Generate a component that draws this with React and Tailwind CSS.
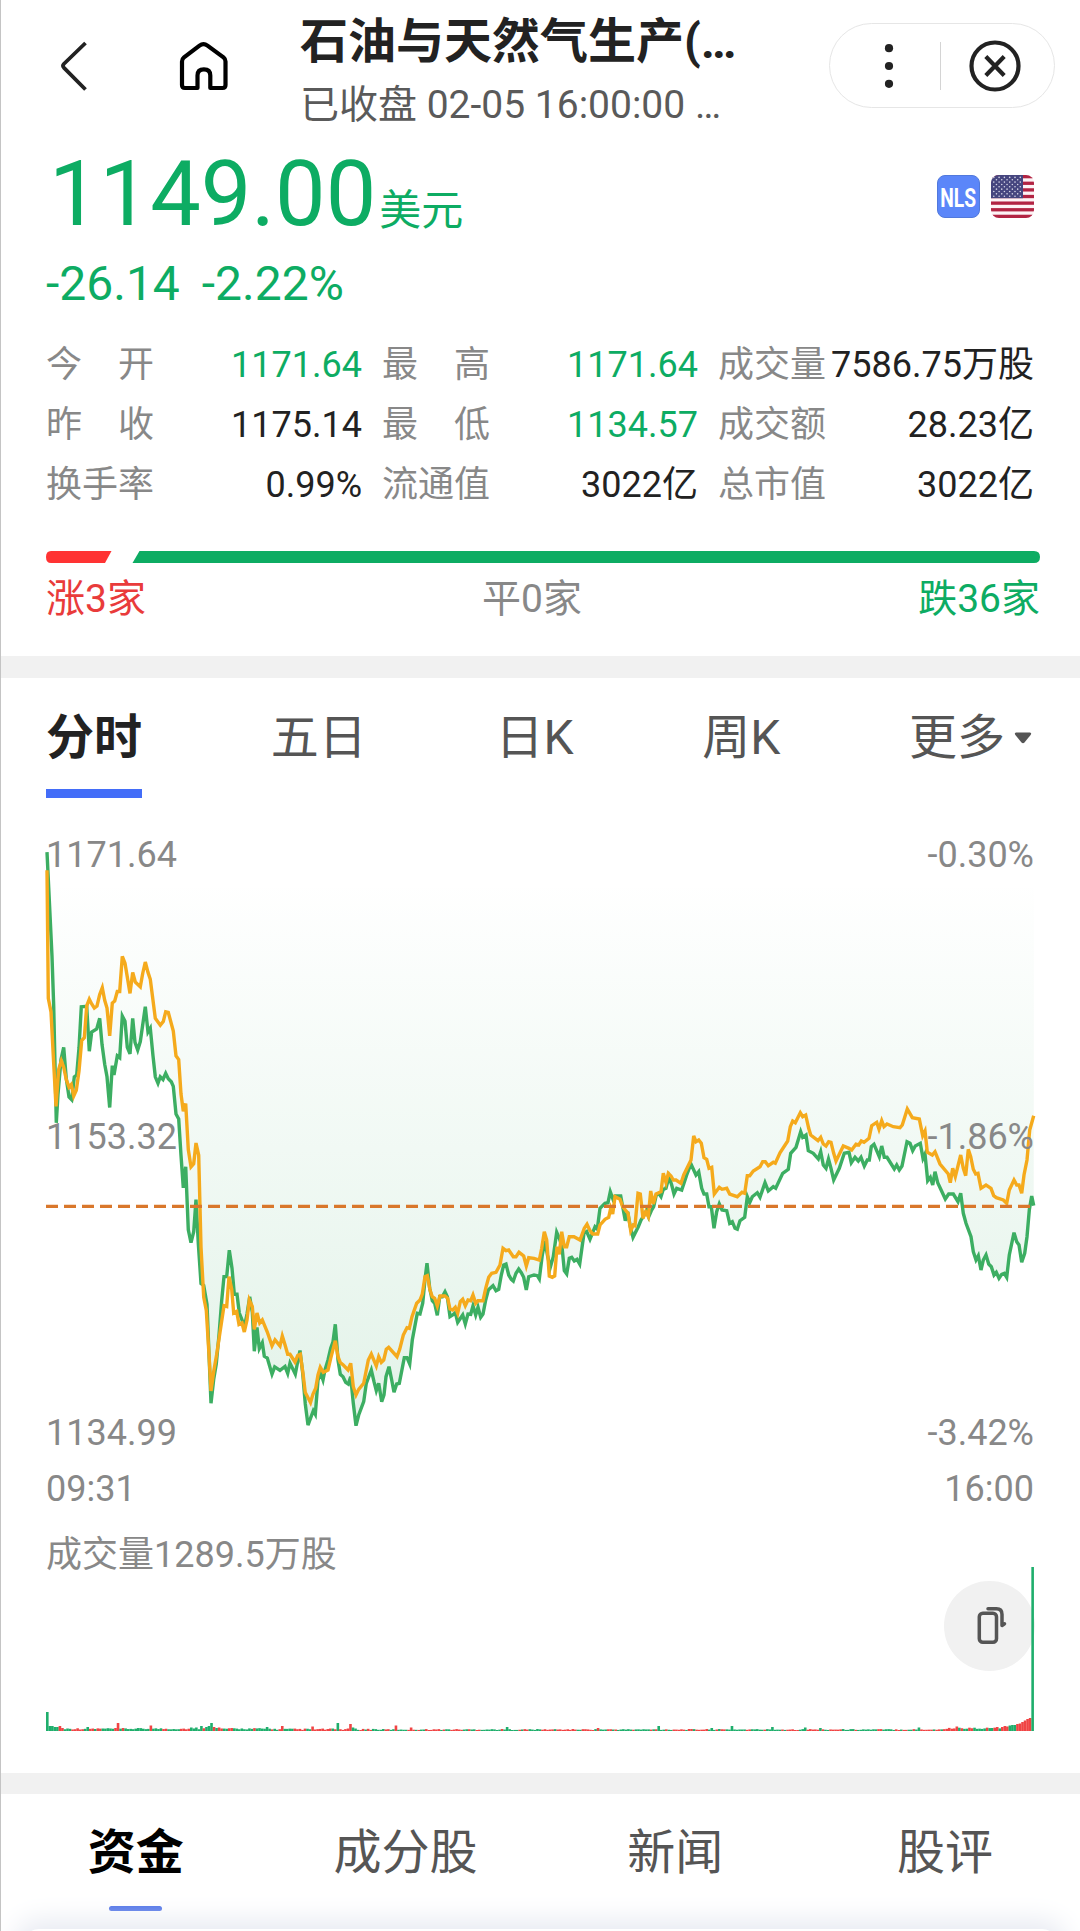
import React, { useState } from 'react';

const stats = [
  { label: '今开', value: '1171.64', down: true },
  { label: '最高', value: '1171.64', down: true },
  { label: '成交量', value: '7586.75万股' },
  { label: '昨收', value: '1175.14' },
  { label: '最低', value: '1134.57', down: true },
  { label: '成交额', value: '28.23亿' },
  { label: '换手率', value: '0.99%' },
  { label: '流通值', value: '3022亿' },
  { label: '总市值', value: '3022亿' },
];

const periods = ['分时', '五日', '日K', '周K', '更多'];
const sections = ['资金', '成分股', '新闻', '股评'];

const priceLine = `47,852.2 52,956.3 53.7,1006 56.3,1122.8 58,1094 61,1059.6 63.7,1047.4 66.3,1078.8 69,1097 71.7,1099.8
74.3,1076.8 76.7,1075 79,1048 81.3,1006.8 86.7,1006.4 89.3,1051.2 91.7,1032 96.7,1029 99.7,1018.3 102,1044.3
104.7,1064.2 107,1076.8 109.7,1107.5 112.3,1065.7 114,1075 117.3,1055.8 119.7,1057.7 122.3,1016 125,1021.3 127.3,1047.4
130,1053.9 132.7,1018.3 135,1042.4 137.7,1050 140.3,1041.6 145.3,1006.8 148,1032 150.3,1028.2 153,1055.8 155.3,1076.8
158,1083.3 160.3,1076.8 163,1079.5 165.7,1073.4 168.3,1078.8 171.3,1081.8 173.3,1086.4 176,1114 178.7,1119 181,1155.3
183.3,1187.8 185.7,1166.8 188.3,1229.9 191,1242.6 193.7,1231.8 196,1199.7 198.3,1243.3 201,1283.5 203.7,1285.4 207,1304.5
211,1403.3 213.7,1379.2 216.3,1363.9 219,1335.2 221.7,1300.7 224,1276.6 226.7,1276.6 229.3,1250.2 232,1268.2 234.3,1294.2
237,1294.2 239.3,1313 242,1319.9 244.3,1327.5 247,1314 249.7,1296.9 252.3,1312.2 254.3,1351.2 257,1327.5 259.3,1348.6
262.3,1342.8 264.3,1356.2 267.3,1358.1 272,1374.2 274.7,1366.9 280,1370.4 285,1366.5 287.7,1373.4 290,1363.1 295.3,1374.2
298,1360 300,1350.5 302.7,1373.4 305.3,1404 308,1425.1 313.3,1410.7 315.3,1414.3 318,1380 320.7,1373.3 323,1380
325,1370 328,1360 330.7,1348.3 333,1341.7 335.3,1324.3 338,1360 340.3,1374.3 343,1376.7 345.7,1382.3 348.3,1384
350.7,1376.7 353.3,1403.3 356,1425.7 358.7,1415 363.7,1401.7 366.3,1383.3 371.3,1370 374,1381.7 376.3,1390.7 378.7,1383.3
381.7,1401.7 384,1395 386,1376.7 389,1366.7 391.7,1380 394,1392.3 396.7,1384 399.3,1383.3 404.3,1357.7 407,1357.7
409.7,1364 412.3,1340 417.3,1313.3 420,1314 422.7,1303.3 425.3,1276.7 427,1263.3 429.7,1288.3 432.3,1300.7 434.7,1303.3
437.3,1315.3 439.7,1296.7 442.3,1296.7 445,1291.7 447.3,1296.7 450,1316.7 452.7,1315 455.3,1312.7 457.7,1322.3 462.7,1315
465.3,1324 468,1314 470.7,1314.3 473,1306 475.7,1315 478,1307.3 480.7,1317.3 483,1314 485.7,1300 488.3,1290
493,1285.7 496,1290.7 498.7,1289.3 501.3,1275 503.7,1265 506,1264 508.7,1275 511.3,1279.3 513.3,1281 516,1273.3
518.7,1269 521.3,1272.7 523.7,1277.3 526.3,1290 528.7,1276.7 534,1275 537.3,1275.7 539.3,1279 542.3,1255 545,1240.7
547.7,1256.7 550.3,1267.3 553.3,1256.7 556.7,1232.3 559.3,1238.3 562,1246.7 564.3,1270.7 566.7,1274 569.3,1258.3 571.7,1257.3
574.3,1261 577,1259.3 579.7,1264 584,1233.3 586.7,1231.5 590,1239.3 595,1226.7 597.3,1229 600,1208.3 605,1203.3
608,1202.7 610.3,1191.7 613,1199.3 615.3,1196 620.7,1196 623.3,1210 625.3,1220.7 627.7,1211.7 630.3,1226.7 633,1237.3
638.3,1226.7 641,1220 643.3,1216.7 646.7,1210 648.7,1216.7 651.3,1210.7 653.7,1206.7 656.3,1195 658.7,1193.3 661,1196.7
663.3,1189.3 666,1188.3 669,1176.7 671.7,1185 674,1194 676.7,1188.3 681.7,1190 686.7,1175 691,1164 696,1175
698.7,1171.7 701.7,1188.3 704,1194 706.7,1194 709,1206.7 711.3,1206.7 714,1228.3 716.7,1211.7 719.3,1204 722,1210
726.7,1210.7 729.7,1223.3 732.3,1221.7 735,1228.3 737.3,1229.3 740,1220.7 744.7,1217.3 747.3,1196.7 749.7,1202.7 752.3,1196.7
757.3,1192.7 760,1197.3 765,1182.7 768.3,1191 773.3,1186.7 775.7,1188.3 782.7,1173.3 788.3,1169.3 790.7,1153.3 796,1147.3
800.7,1131.7 802.7,1137.3 806,1135 808.3,1150.7 813.3,1153.3 818.3,1159 820.7,1151.7 823.3,1165 826,1168.3 828.5,1159
831,1168.3 833.7,1180 839.3,1168.3 844.3,1153.3 849,1152.3 851.3,1162.7 855,1157.3 858.3,1161 861,1157.3 864.3,1166
867.3,1160 869.3,1160 871.3,1146.7 874,1144.3 879.3,1156.7 881.7,1146 884.3,1157.3 887,1157.3 894.3,1169 896.7,1165
899.3,1170 902,1166 907,1141.7 910,1143.3 912.7,1150.7 915.3,1146 920.3,1143.3 923,1158.3 925,1154 927.7,1180.7
930.3,1177.3 932.7,1185 935,1171.7 937.7,1182.7 940.3,1188.3 945.3,1199 948.7,1194 953.3,1194 958,1201.7 960.7,1193.3
963.3,1213.3 966,1223.3 971,1236.7 973.3,1251.7 976,1260 978.3,1255.7 981,1270 983.3,1260 986,1255 988.7,1264
991.3,1266.7 994,1275 996.3,1272.3 999,1278.3 1001.7,1274.3 1004.3,1273.3 1006.7,1277.3 1009.3,1255 1014,1232.7 1016.7,1241.7
1019,1245 1021.7,1262.3 1024.7,1253.3 1027,1236.7 1029.3,1210 1031.7,1196 1033.7,1205.7`;

const averageLine = `47,870.2 48.3,998.4 51,1011.8 53.3,1055.8 56,1106.3 58.7,1069.2 61.3,1060.8 63.7,1067.3 66.3,1079.5 69,1087.2
71.3,1084.5 73.7,1096 76.3,1090.2 79,1071 81.7,1040.5 84.3,1037.8 86.7,1006 89.3,999.2 91.7,1004 94.3,1008
97,1006 99.7,994.6 102.3,987.7 104.7,1000.3 107,1008 109.7,1035.9 112.3,1003 114.7,1001 117.3,991.5 119.7,991.5
122.3,956.3 125,963.2 130,993.4 132.7,972.4 135.3,982 140.3,986.9 142.7,973.5 145.3,962 148,972.4 150.3,979.3
155.3,1018.3 160.3,1025.2 163.3,1021.4 165.7,1011.8 168.3,1012.5 173.3,1031 176,1055.8 178.7,1059.6 181,1094 183.3,1111.3
185.7,1103.6 188.3,1149.5 191,1166.8 193.7,1163.7 196,1143 198.7,1155.3 201,1247 203.7,1297 206.3,1310.3 209,1354.3
211,1391 213.7,1371.5 216.7,1354.3 224,1305.7 226.7,1306.5 229,1276.6 231.7,1289.2 233.7,1313 236.7,1311.4 239,1324.4
242,1323 244.3,1332 247,1319.9 249.3,1300 252.3,1306.5 254.3,1329.4 257,1313 259.7,1323 262.3,1319.9 267.3,1332
272,1345.9 275,1339.8 280,1345.9 282.3,1336 285,1344.7 287.7,1354.3 290,1354.3 295,1362 297.7,1355.5 300.3,1354.3
303,1373.4 305.3,1392.6 310.5,1402.5 313,1394 315.7,1388.3 318,1375 320.3,1367.3 323.3,1372.3 328,1370 330.7,1358.3
335.3,1340.7 338,1356.7 340.3,1362.7 343.3,1365 348,1370 350.7,1363.3 353.3,1386.7 356,1395 358.7,1389.3 363.7,1383.3
368.3,1360 371.3,1354 376.3,1366 378.7,1356.7 381.3,1362.3 383.7,1360 386.3,1349.3 388.7,1347.3 397,1356.7 399.7,1349.3
403.3,1335 407,1327.7 409.3,1328.3 412,1316.7 416.7,1303.3 420,1300 422.3,1294 425,1276.7 427.3,1275.7 430,1290
432.3,1296.7 434.7,1298.3 437.3,1306 440,1296 445,1296 447.7,1298.3 450,1309 452.7,1310 455.3,1307.3 457.7,1313.3
460.3,1301.7 462.7,1299.3 465.3,1305.7 468,1300 470.7,1300.7 473,1295 475.7,1303.3 478,1300.7 483,1300.7 485.7,1288.3
488.7,1277.3 491.7,1273.3 496,1272.3 500,1265 503,1248.3 506,1250.7 508.7,1250 513.3,1256.7 516,1256.7 519,1252.3
523.7,1256 526.3,1266 528.7,1257.7 534,1258.3 539.3,1260 541.7,1248.3 544.3,1231.7 546.7,1240 549.3,1276 552.3,1277.3
554.7,1276 557,1246.7 559.3,1254.3 561.7,1231.7 564.3,1246.7 566.7,1246.7 569.3,1236.7 574,1236.7 580,1240 584.3,1228.3
587,1224.3 590,1230.7 592.7,1234 597.7,1234 600,1225 605,1219.3 608.7,1217.3 610.7,1208.3 612.7,1214 615,1196.7
620,1199.3 622.7,1206.7 628,1213.3 630.7,1230.7 633.3,1225 635,1225.7 638,1193.3 640.3,1194 643,1218.3 645.7,1211.7
648.3,1216.7 650.7,1191 653.3,1204 656,1194 661,1191.7 663.3,1173.3 666,1182.7 668.3,1173.3 671,1176 673.3,1180
676,1180 681,1183.3 683.7,1175 691,1160 693.7,1136 696,1141.7 698.7,1140 701.3,1143.3 704,1157.7 706.7,1159.3
709,1168.3 711.7,1167.3 714.3,1194 719.3,1187.3 722,1189.3 726.7,1188.3 729.7,1194 737.3,1196.7 742,1192.3 744.7,1193.3
747.3,1175.7 749.7,1175.7 753.3,1171 760,1166.7 762.7,1161.7 765.3,1161.7 768.3,1165.7 773.3,1162.3 775.3,1163.3 780,1152.7
787.7,1141 790.3,1126.7 792.7,1121 795.3,1122.7 800.3,1112.7 802.7,1116.7 805.7,1115 808.7,1128.3 810.7,1135 818,1140.7
820.7,1137.3 823.3,1144 826,1146 828.7,1141.7 831,1142.3 833.7,1153.3 836,1161 843.3,1146 849,1148.3 851.7,1150
856,1144.3 858.7,1145 861.3,1141 864,1142.3 869,1138.3 871.7,1125.7 876.7,1122.3 879,1129.3 881.7,1120.7 884,1126.7
887,1124 893.3,1126.7 900,1127.7 902.3,1125 907.3,1109 912.3,1117.7 919.3,1119 922.7,1135.7 925,1131 927.3,1152.3
932.3,1155 935,1151.7 940,1164 948.3,1174 950.3,1182.7 952.7,1168.3 955.3,1176.7 960.7,1155 963.3,1168.3 965.7,1175.7
968.3,1149.3 970.7,1156.7 973.3,1169.3 975.7,1174 978,1173.3 981,1188.3 986,1185 991,1188.3 993.7,1195.7 996.3,1197.7
1003.3,1200 1006.7,1203.3 1009.3,1190 1014,1180 1016.7,1185 1019,1185 1021.7,1193.3 1024,1175 1027,1160 1029.7,1130 1033.7,1115.7`;

// minutes with notable volume: [minute index, height, up]
const peaks = [
  [0, 19, 0], [1, 5, 0], [2, 5, 0], [3, 4, 0], [4, 4, 0], [5, 5, 1], [6, 3, 1], [16, 4, 0], [28, 8, 1], [41, 5.5, 1],
  [57, 3.5, 0], [59, 3.5, 0], [61, 5, 0], [63, 4, 0], [64, 5, 0], [65, 8, 0], [66, 4, 1], [67, 3, 0], [68, 3.5, 1], [87, 4, 0], [93, 5, 1],
  [105, 4.5, 1], [115, 8, 0], [120, 7, 1], [121, 3.5, 0], [138, 5.5, 1], [144, 3.5, 1], [182, 4, 0], [218, 3, 1], [242, 5, 0],
  [263, 3, 0], [271, 5, 0], [287, 4, 0], [300, 3.5, 0], [306, 3, 0], [345, 3.5, 0], [360, 4.5, 1], [374, 3, 0], [376, 4, 1],
  [378, 4, 1], [379, 5, 1], [380, 4.5, 1], [381, 5.5, 0], [382, 6, 0], [383, 6, 0], [384, 7, 1], [385, 7.5, 1], [386, 9, 1],
  [387, 10.5, 1], [388, 12, 1], [389, 13, 1], [390, 164, 0],
];

const volumes = Array.from({ length: 391 }, (_, i) => {
  const noise = Math.abs(Math.sin(i * 12.9898) * 43758.5453) % 1;
  const tone = Math.sin(i * 0.71) + Math.sin(i * 1.93) + Math.sin(i * 0.13);
  const base = i < 90 ? 1.5 : i > 355 ? 2 : 1;
  return { h: base + noise * (i > 130 && i < 355 ? 1 : 1.5), up: i > 68 ? tone > 0.1 : tone > 0.7 };
});
peaks.forEach(([i, h, up]) => { volumes[i] = { h, up: up === 1 }; });

function BackIcon() {
  return (
    <svg width="30" height="54" viewBox="59 39 30 54" fill="none" stroke="#222" strokeWidth="3.8">
      <path d="M85.5 43 L63.8 64 Q62.2 65.8 63.8 67.6 L85.5 89.5" />
    </svg>
  );
}

function HomeIcon() {
  return (
    <svg width="54" height="54" viewBox="177 39 54 54" fill="none" stroke="#000" strokeWidth="4.2" strokeLinejoin="round">
      <path d="M197.5 88 H185 Q182 88 182 85 V61.500 Q182 59 184 57.400 L199.500 45.600 Q203.500 42.600 207.500 45.600 L223.500 57.400 Q225.500 59 225.500 61.500 V85 Q225.500 88 222.500 88 H210.300 V75.500 Q210.300 69.300 203.900 69.300 Q197.500 69.300 197.500 75.500 Z" />
    </svg>
  );
}

function FlagIcon() {
  return (
    <svg width="43" height="43" viewBox="0 0 43 43" className="rounded-lg">
      <rect width="43" height="43" fill="#fdf3f5" />
      {[0, 1, 2, 3, 4, 5, 6].map((i) => (
        <rect key={i} y={i * 6.62} width="43" height="3.31" fill="#b22443" />
      ))}
      <rect width="32" height="23.200" fill="#46467f" />
      {[0, 1, 2, 3, 4, 5, 6, 7, 8].map((r) =>
        [0, 1, 2, 3, 4, 5].map((c) => (
          (r % 2 === 0 || c < 5) && <circle key={`${r}-${c}`} cx={2.8 + c * 5.300 + (r % 2) * 2.650} cy={2.4 + r * 2.350} r="0.8" fill="#d5d5e6" />
        ))
      )}
    </svg>
  );
}

export default function App() {
  const [period, setPeriod] = useState('分时');
  const [section, setSection] = useState('资金');

  return (
    <div className="w-[1080px] h-[1931px] bg-white border-l border-[#c4c4c4] overflow-hidden flex flex-col text-[#222] font-['Roboto','Noto_Sans_CJK_SC',sans-serif]">

      <header className="h-[135px] shrink-0 flex pl-[58px] pr-[25px] pt-[9px]">
        <button className="mt-[30px] h-[54px]"><BackIcon /></button>
        <button className="mt-[30px] ml-[88px] h-[54px]"><HomeIcon /></button>
        <div className="ml-[69px] w-[440px] whitespace-nowrap">
          <h1 className="text-[48px] leading-[66px] font-bold">石油与天然气生产(…</h1>
          <p className="text-[39px] leading-[60px] text-[#5a5a5a]">已收盘 02-05 16:00:00 …</p>
        </div>
        <div className="ml-auto mt-3.5 w-[226px] h-[85px] rounded-full border border-[#e6e6e6] flex items-center">
          <svg width="10" height="46" viewBox="0 0 10 46" className="ml-[54px]" fill="#222">
            <circle cx="5" cy="5.200" r="4.100" />
            <circle cx="5" cy="23" r="4.100" />
            <circle cx="5" cy="40.800" r="4.100" />
          </svg>
          <div className="ml-[46px] w-px h-12 bg-[#d4d4d4]"></div>
          <svg width="54" height="54" viewBox="0 0 54 54" className="ml-[27px]" fill="none" stroke="#222" strokeWidth="4.200">
            <circle cx="27" cy="27" r="23.500" />
            <path d="M17.800 17.500 L36.200 36.500 M36.200 17.500 L17.800 36.500" />
          </svg>
        </div>
      </header>

      <section className="h-[521px] shrink-0 pl-[45px] pr-[40px] pt-[10px]">
        <div className="flex justify-between pr-[6px]">
          <div className="flex items-baseline text-[#0dac63]">
            <span className="ml-[3px] text-[90px] leading-[100px]">1149.00</span>
            <span className="ml-[3px] text-[42px] leading-[60px]">美元</span>
          </div>
          <div className="flex gap-[11px] mt-[30px]">
            <div className="w-[43px] h-[43px] rounded-lg bg-[#5b86f9] border border-[#5179dc] flex items-center justify-center">
              <span className="mt-[2px] text-white text-[26px] leading-none font-bold scale-x-[0.74]">NLS</span>
            </div>
            <FlagIcon />
          </div>
        </div>
        <div className="mt-[11px] flex gap-[22px] text-[48px] leading-[56px] text-[#0dac63]">
          <span>-26.14</span>
          <span>-2.22%</span>
        </div>
        <div className="mt-[23px] mr-[6px] grid grid-cols-3 gap-x-5 text-[36px] leading-[60px]">
          {stats.map((s) => (
            <div key={s.label} className="flex justify-between whitespace-nowrap">
              <span className="w-[108px] shrink-0 flex justify-between text-[#888]">
                {s.label.split('').map((ch, i) => <span key={i}>{ch}</span>)}
              </span>
              <span className={s.down ? 'text-[#0dac63]' : 'text-[#222]'}>{s.value}</span>
            </div>
          ))}
        </div>
        <svg width="994" height="12" viewBox="0 0 994 12" className="mt-9 block">
          <path d="M5 0 H65.500 L59 12 H5 Q0 12 0 6 Q0 0 5 0 Z" fill="#ff3333" />
          <path d="M93.500 0 H988 Q994 0 994 6 Q994 12 988 12 H86.500 Z" fill="#0dac63" />
        </svg>
        <div className="mt-[11px] flex justify-between text-[39px] leading-[50px]">
          <span className="text-[#e93b3b]">涨3家</span>
          <span className="text-[#888]">平0家</span>
          <span className="text-[#0dac63]">跌36家</span>
        </div>
      </section>

      <div className="h-[22px] shrink-0 bg-[#f1f1f1]"></div>

      <section className="h-[1095px] shrink-0 pl-[45px] pr-[46px]">
        <nav className="flex justify-between pt-[30px] text-[48px] leading-[60px] text-[#555]">
          {periods.map((p) => (
            <button
              key={p}
              onClick={() => setPeriod(p)}
              className={`h-[90px] flex flex-col justify-between ${p === period ? 'font-bold text-[#222]' : ''}`}
            >
              <span className="flex items-center">
                {p}
                {p === '更多' && (
                  <svg width="18" height="12" viewBox="0 0 18 12" className="ml-[9px] mr-[2px]" fill="#555">
                    <path d="M2 0.500 H16 Q18 1 16.600 3 L10.500 10.500 Q9 12 7.500 10.500 L1.400 3 Q0 1 2 0.500 Z" />
                  </svg>
                )}
              </span>
              {p === period && <span className="w-full h-[9px] bg-[#436df8]"></span>}
            </button>
          ))}
        </nav>

        <div className="relative mt-9 h-[619px] text-[36px] leading-[42px] text-[#888]">
          <svg width="992" height="619" viewBox="44 834 992 619" className="absolute top-0 -left-[2px]" fill="none">
            <defs>
              <linearGradient id="area" x1="0" y1="880" x2="0" y2="1425" gradientUnits="userSpaceOnUse">
                <stop offset="0" stopColor="#34a860" stopOpacity="0" />
                <stop offset="1" stopColor="#34a860" stopOpacity="0.14" />
              </linearGradient>
            </defs>
            <polygon points={`47,840 ${priceLine} 1034,840`} fill="url(#area)" />
            <polyline points={priceLine} stroke="#3cae62" strokeWidth="3.400" strokeLinejoin="miter" />
            <polyline points={averageLine} stroke="#f5aa1c" strokeWidth="3.400" strokeLinejoin="miter" />
            <line x1="46" y1="1206.400" x2="1034" y2="1206.400" stroke="#d9772b" strokeWidth="3.400" strokeDasharray="12 6" />
          </svg>
          <div className="relative flex justify-between"><span>1171.64</span><span>-0.30%</span></div>
          <div className="relative flex justify-between mt-[240px]"><span>1153.32</span><span>-1.86%</span></div>
          <div className="relative flex justify-between mt-[254px]"><span>1134.99</span><span>-3.42%</span></div>
        </div>
        <div className="mt-[15px] flex justify-between text-[36px] leading-[42px] text-[#888]">
          <span>09:31</span>
          <span>16:00</span>
        </div>

        <div className="relative mt-6 h-[197px]">
          <p className="text-[36px] leading-[42px] text-[#888]">成交量1289.5万股</p>
          <button className="absolute right-[-1px] top-[47px] w-[91px] h-[90px] rounded-full bg-[#f1f1f1] flex items-center justify-center">
            <svg width="34" height="42" viewBox="972 1605 34 42" fill="none" stroke="#555" strokeWidth="3.500" strokeLinecap="round" strokeLinejoin="round">
              <rect x="978.300" y="1613.300" width="17.200" height="29" rx="3.500" />
              <path d="M987 1608.800 H995.500 Q1001 1608.800 1001 1614.500 V1625.500 L1003.500 1623.800" />
            </svg>
          </button>
          <svg width="988" height="164" viewBox="0 0 988 164" className="absolute left-0 bottom-0">
            {volumes.map((v, i) => (
              <rect key={i} x={i * 2.5265} y={164 - v.h} width="2.600" height={v.h} fill={v.up ? '#f04444' : '#1fae6c'} />
            ))}
          </svg>
        </div>
      </section>

      <div className="h-[21px] shrink-0 bg-[#f1f1f1]"></div>

      <nav className="h-[135px] shrink-0 grid grid-cols-4 text-[48px] leading-[60px] text-[#555]">
        {sections.map((s) => (
          <button
            key={s}
            onClick={() => setSection(s)}
            className={`pt-[29px] flex flex-col items-center ${s === section ? 'font-bold text-black' : ''}`}
          >
            {s}
            {s === section && <span className="mt-[23px] w-[53px] h-[5px] rounded-full bg-[#4a6fe8]"></span>}
          </button>
        ))}
      </nav>
      <div className="mx-[22px] h-20 shrink-0 rounded-2xl bg-white shadow-[0_0_28px_8px_#e6e9f1]"></div>
    </div>
  );
}
